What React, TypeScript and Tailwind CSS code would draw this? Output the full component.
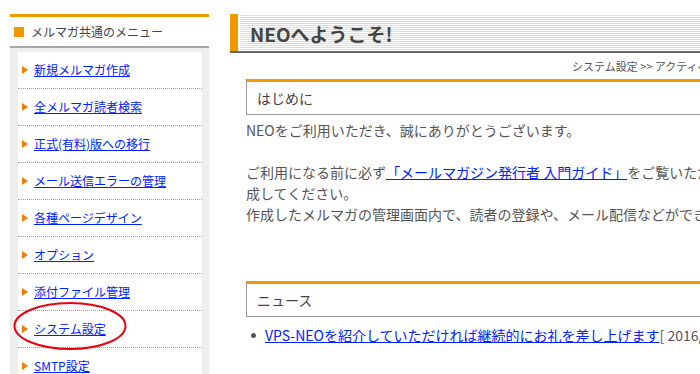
import React from "react"

const menuItems: string[] = [
  "新規メルマガ作成",
  "全メルマガ読者検索",
  "正式(有料)版への移行",
  "メール送信エラーの管理",
  "各種ページデザイン",
  "オプション",
  "添付ファイル管理",
  "システム設定",
  "SMTP設定",
]

const Sidebar: React.FC = () => {
  return (
    <div className="relative ml-[10px] w-[199px] shrink-0">
      {/* header */}
      <div className="border-t-[3px] border-[#f39800] bg-white">
        <div className="flex h-[31px] items-center border-b-2 border-[#a8a8a8] pl-[4px]">
          <span className="block h-[10px] w-[10px] bg-[#f39800]" />
          <span className="ml-[7px] text-[12px] leading-none text-[#444]">メルマガ共通のメニュー</span>
        </div>
      </div>

      {/* menu */}
      <div className="bg-[#eeeeee] pl-[8px] pr-[7px] pt-[4px]">
        <ul className="bg-white">
          {menuItems.map((item, index) => (
            <li
              key={index}
              className="flex h-[37px] items-center border-b border-dotted border-[#a0a0a0] pl-[4px]"
            >
              <span className="block h-0 w-0 border-y-[4px] border-l-[6px] border-y-transparent border-l-[#f07c00]" />
              <a href="#" className="ml-[6px] text-[12px] leading-none text-[#0022ff] underline">
                {item}
              </a>
            </li>
          ))}
        </ul>
      </div>

      {/* red circle drawn over the menu */}
      <svg className="pointer-events-none absolute left-[2px] top-[287px]" width="116" height="50" viewBox="0 0 116 50">
        <ellipse cx="58" cy="25" rx="55.5" ry="23" fill="none" stroke="#e60012" strokeWidth="2" />
      </svg>
    </div>
  )
}

const SectionBox: React.FC<{ title: string }> = ({ title }) => (
  <div className="ml-[16px] border-x border-b border-t-[3px] border-[#999] border-t-[#f39800]">
    <div className="flex h-[32px] items-center pl-[10px] text-[14px] leading-none text-[#444]">{title}</div>
  </div>
)

const Main: React.FC = () => {
  return (
    <div className="ml-[21px] w-[760px] shrink-0">
      {/* title bar */}
      <div className="flex h-[39px] border-b-2 border-[#666]">
        <div className="w-[8px] bg-[#f39800]" />
        <div className="ml-[2px] mt-[1px] flex flex-1 items-center bg-[repeating-linear-gradient(to_bottom,#dcdcdc_0px,#dcdcdc_1px,#ffffff_1px,#ffffff_2px)] pl-[10px]">
          <h1 className="text-[19px] font-bold leading-none text-[#444]">NEOへようこそ!</h1>
        </div>
      </div>

      {/* breadcrumb */}
      <div className="mt-[6px] pl-[342px] text-[11px] leading-[14px] text-[#555] whitespace-nowrap">
        システム設定 &gt;&gt; アクティベーション
      </div>

      <div className="mt-[6px]">
        <SectionBox title="はじめに" />
      </div>

      <div className="ml-[16px] mt-[5px] whitespace-nowrap text-[14px] leading-[21px] text-[#555]">
        <p>NEOをご利用いただき、誠にありがとうございます。</p>
        <p className="mt-[21px]">
          ご利用になる前に必ず
          <a href="#" className="text-[#0022ff] underline">「メールマガジン発行者 入門ガイド」</a>
          をご覧いただき、メルマガを作
          <br />
          成してください。
          <br />
          作成したメルマガの管理画面内で、読者の登録や、メール配信などができます。
        </p>
      </div>

      <div className="mt-[56px]">
        <SectionBox title="ニュース" />
      </div>

      <ul className="ml-[16px] mt-[8px] whitespace-nowrap text-[14px] leading-[20px] text-[#555]">
        <li className="flex items-center">
          <span className="ml-[5px] block h-[5px] w-[5px] rounded-full bg-[#555]" />
          <a href="#" className="ml-[9px] text-[#0022ff] underline">
            VPS-NEOを紹介していただければ継続的にお礼を差し上げます
          </a>
          <span>[ 2016/04/01 ]</span>
        </li>
      </ul>
    </div>
  )
}

export default function App() {
  return (
    <div className="h-[374px] w-[700px] overflow-hidden bg-white font-['Noto_Sans_CJK_JP','Noto_Sans',sans-serif]">
      <div className="flex w-[1000px] pt-[14px]">
        <Sidebar />
        <Main />
      </div>
    </div>
  )
}
